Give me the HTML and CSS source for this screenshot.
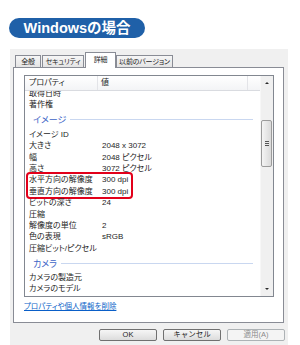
FILE: index.html
```html
<!DOCTYPE html>
<html lang="ja">
<head>
    <meta charset="UTF-8">
    <meta name="viewport" content="width=device-width, initial-scale=1.0">
    <title>Windowsの場合</title>
    <link rel="stylesheet" href="styles.css">
</head>
<body>
    <div class="badge">Windowsの場合</div>

    <div class="dialog">
        <div class="tabs">
            <span class="tab tab-general">全般</span>
            <span class="tab tab-security">セキュリティ</span>
            <span class="tab tab-detail active">詳細</span>
            <span class="tab tab-history">以前のバージョン</span>
        </div>

        <div class="panel">
            <div class="list">
                <div class="list-main">
                    <div class="list-head">
                        <span class="col-name">プロパティ</span>
                        <span class="col-value">値</span>
                        <span class="col-rest"></span>
                    </div>
                    <div class="list-body">
                        <div class="rows">
                            <div class="row"><span class="name">取得日時</span><span class="value"></span></div>
                            <div class="row"><span class="name">著作権</span><span class="value"></span></div>

                            <div class="group">イメージ</div>
                            <div class="row"><span class="name">イメージ ID</span><span class="value"></span></div>
                            <div class="row"><span class="name">大きさ</span><span class="value">2048 x 3072</span></div>
                            <div class="row"><span class="name">幅</span><span class="value">2048 ピクセル</span></div>
                            <div class="row"><span class="name">高さ</span><span class="value">3072 ピクセル</span></div>
                            <div class="marked">
                                <div class="row"><span class="name">水平方向の解像度</span><span class="value">300 dpi</span></div>
                                <div class="row"><span class="name">垂直方向の解像度</span><span class="value">300 dpi</span></div>
                            </div>
                            <div class="row"><span class="name">ビットの深さ</span><span class="value">24</span></div>
                            <div class="row"><span class="name">圧縮</span><span class="value"></span></div>
                            <div class="row"><span class="name">解像度の単位</span><span class="value">2</span></div>
                            <div class="row"><span class="name">色の表現</span><span class="value">sRGB</span></div>
                            <div class="row"><span class="name">圧縮ビット/ピクセル</span><span class="value"></span></div>

                            <div class="group">カメラ</div>
                            <div class="row"><span class="name">カメラの製造元</span><span class="value"></span></div>
                            <div class="row"><span class="name">カメラのモデル</span><span class="value"></span></div>
                        </div>
                    </div>
                </div>
                <div class="scrollbar">
                    <div class="sb-btn"><span class="arrow-up"></span></div>
                    <div class="sb-track"><div class="sb-thumb"><span class="grip"></span></div></div>
                    <div class="sb-btn"><span class="arrow-down"></span></div>
                </div>
            </div>
            <a class="remove-link" href="#">プロパティや個人情報を削除</a>
        </div>

        <div class="buttons">
            <button type="button" class="btn">OK</button>
            <button type="button" class="btn">キャンセル</button>
            <button type="button" class="btn" disabled>適用(A)</button>
        </div>
    </div>
</body>
</html>
```

FILE: styles.css
```css
body { margin: 0; background: #fff; font-family: "Liberation Sans", "Noto Sans CJK JP", sans-serif; color: #1e1e1e; font-feature-settings: "palt"; }

/* title pill */
.badge { margin: 18px 0 0 9px; width: 136px; height: 20px; line-height: 20px; border-radius: 10px; background: #1f60a8; color: #fff; font-weight: bold; font-size: 14.5px; text-align: center; }

/* dialog */
.dialog { margin: 11px 0 0 10px; width: 278px; height: 296px; background: #f0f0f0; padding-top: 3px; box-sizing: border-box; }
.tabs { display: flex; align-items: flex-end; height: 15px; padding-left: 5px; }
.tab { height: 12px; box-sizing: border-box; border: 1px solid #898c95; border-bottom: none; background: linear-gradient(#f6f6f6, #e4e4e4); font-size: 7px; line-height: 11px; letter-spacing: -0.2px; white-space: nowrap; overflow: hidden; text-align: center; margin-right: 1px; }
.tab.active { height: 16px; margin-bottom: -1px; margin-right: 0; background: #fff; position: relative; z-index: 1; line-height: 13px; }
.tab-general { width: 26px; }
.tab-security { width: 42px; }
.tab-detail { width: 31px; }
.tab-history { width: 57px; }

.panel { margin-left: 3px; width: 271px; height: 256px; box-sizing: border-box; border: 1px solid #898c95; background: #fff; padding: 7px 0 0 10px; }

/* property list */
.list { width: 250px; height: 222px; box-sizing: border-box; border: 1px solid #828790; display: flex; }
.list-main { flex: 1; min-width: 0; display: flex; flex-direction: column; }
.list-head { height: 15px; flex: none; box-sizing: border-box; display: flex; border-bottom: 1px solid #d9dbe0; background: linear-gradient(#fff, #f3f4f6); font-size: 8px; line-height: 14px; }
.col-name { width: 73px; padding-left: 4px; box-sizing: border-box; border-right: 1px solid #e3e4e8; }
.col-value { width: 150px; padding-left: 3px; box-sizing: border-box; border-right: 1px solid #e3e4e8; }
.col-rest { flex: 1; }
.list-body { flex: 1; min-height: 0; overflow: hidden; }
.rows { margin-top: -3px; }
.row { display: flex; height: 11.4px; line-height: 11.4px; font-size: 8px; white-space: nowrap; }
.row .name { width: 73px; padding-left: 4px; box-sizing: border-box; }
.row .value { padding-left: 4px; }
.group { height: 18px; display: flex; align-items: center; gap: 4px; padding-left: 8px; margin-right: 7px; color: #3c63c6; font-size: 9px; }
.group::after { content: ""; flex: 1; height: 1px; background: #c9d7f0; }

.marked { width: 107px; margin: -2px 0 -2px 1px; box-sizing: border-box; border: 2px solid #e2001a; border-radius: 4px; }
.marked .row .name { width: 70px; padding-left: 1px; }

/* scrollbar */
.scrollbar { width: 12px; flex: none; display: flex; flex-direction: column; background: #f0f0f0; border-left: 1px solid #f7f7f7; }
.sb-btn { height: 14px; display: flex; align-items: center; justify-content: center; }
.arrow-up { border-left: 2px solid transparent; border-right: 2px solid transparent; border-bottom: 2px solid #2a2a2a; }
.arrow-down { border-left: 2px solid transparent; border-right: 2px solid transparent; border-top: 2px solid #2a2a2a; }
.sb-track { flex: 1; padding: 30px 1px 0 0; }
.sb-thumb { height: 47px; box-sizing: border-box; border: 1px solid #9b9b9b; border-radius: 2px; background: linear-gradient(90deg, #f4f4f4, #dadada); display: flex; align-items: center; justify-content: center; }
.grip { width: 4px; height: 5px; background: repeating-linear-gradient(#555 0 1px, #e8e8e8 1px 2px); }

.remove-link { display: block; margin-top: 5px; font-size: 7.5px; line-height: 10px; color: #0a5fc8; text-decoration: underline; }

/* buttons */
.buttons { display: flex; justify-content: flex-end; gap: 6px; margin-top: 6px; padding-right: 3px; }
.btn { width: 58px; height: 12px; padding: 0; box-sizing: border-box; border: 1px solid #707070; border-radius: 2px; background: linear-gradient(#f6f6f6, #dcdcdc); font-family: inherit; font-size: 7.5px; line-height: 10px; color: #1e1e1e; }
.btn:disabled { border-color: #adb2b5; background: #f4f4f4; color: #8a8a8a; }
```
